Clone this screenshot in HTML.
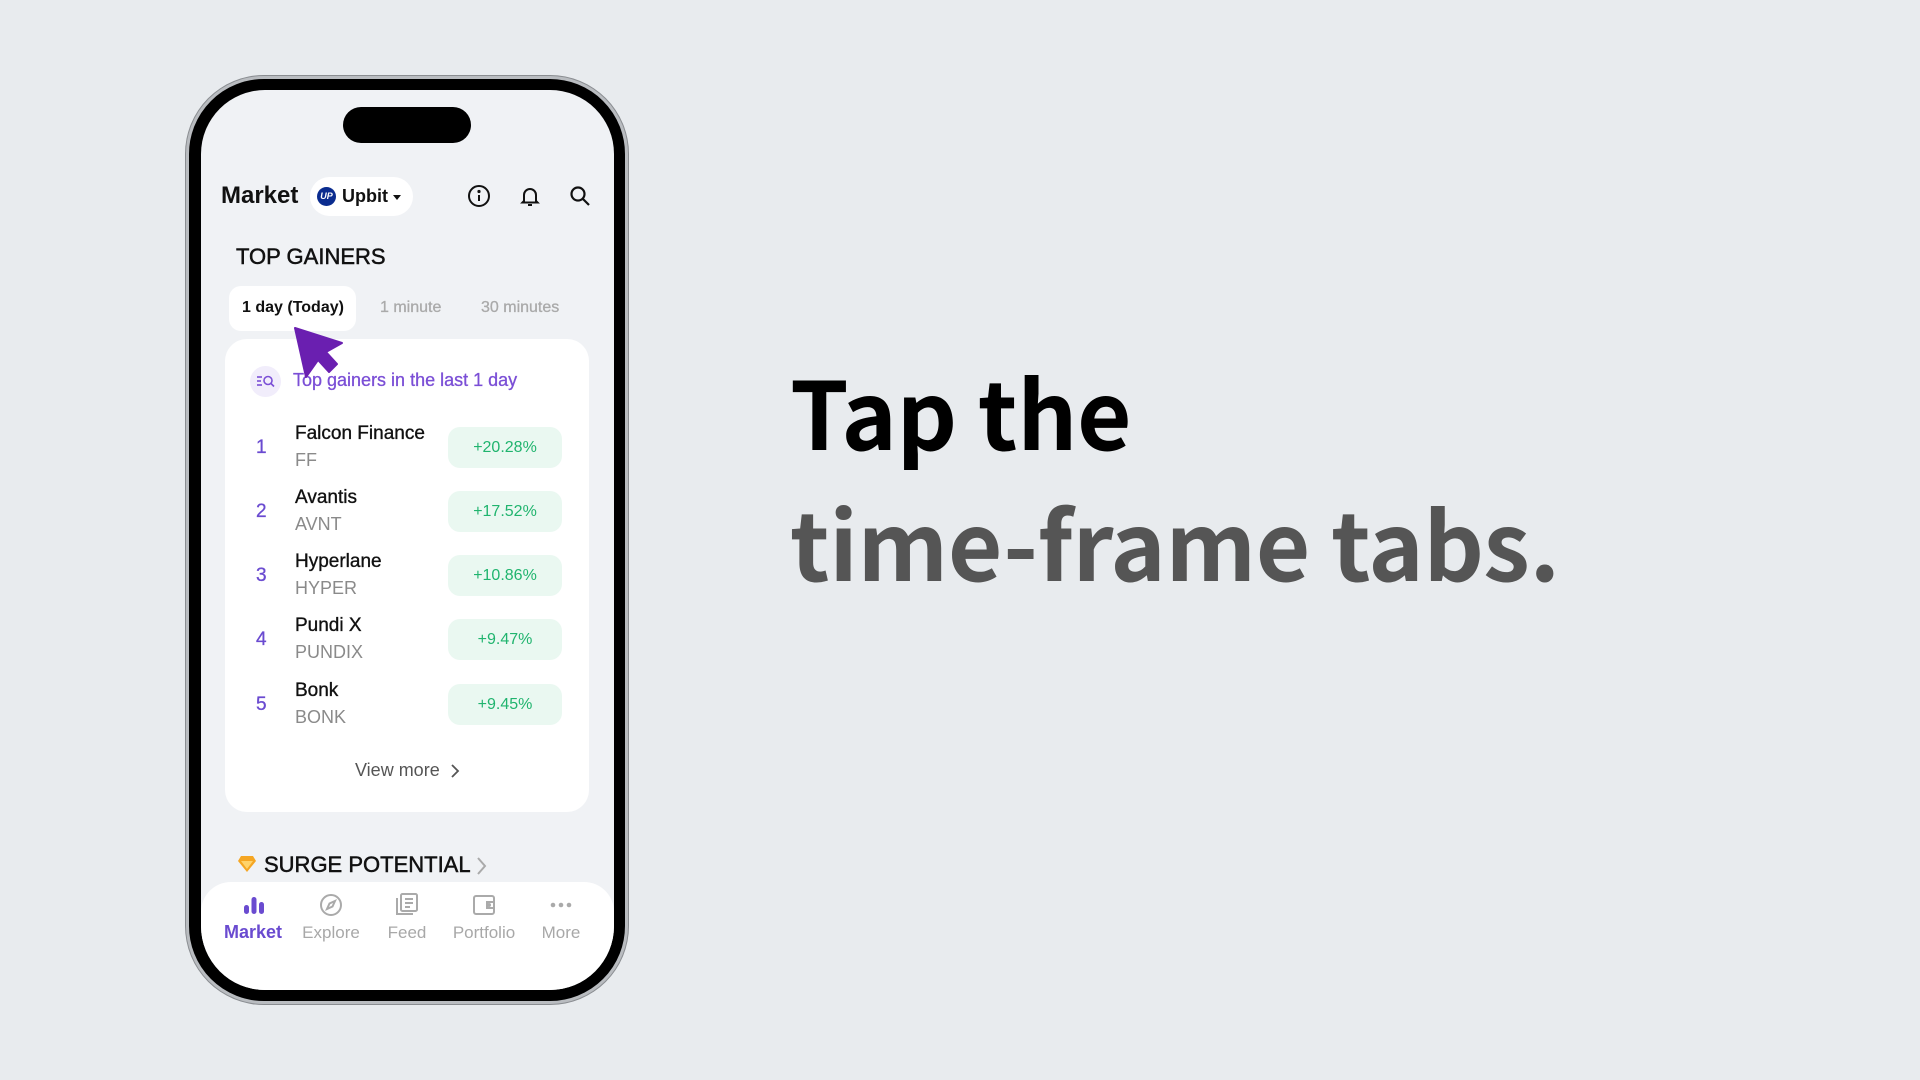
<!DOCTYPE html>
<html><head><meta charset="utf-8"><style>
*{margin:0;padding:0;box-sizing:border-box}
body{width:1920px;height:1080px;background:#e8ebee;position:relative;overflow:hidden;font-family:"Liberation Sans",sans-serif}
.abs{position:absolute}
.frame{left:186px;top:76px;width:442px;height:928px;border-radius:78px;background:#000;border:3px solid #b9bcc0;box-shadow:0 0 0 1px #8a8d91}
.screen{left:201px;top:90px;width:413px;height:900px;border-radius:64px;background:#f0f2f5;overflow:hidden}
.island{left:343px;top:107px;width:128px;height:36px;border-radius:18px;background:#000}
.t{position:absolute;white-space:nowrap}
.pill{position:absolute;left:448px;width:114px;height:41px;border-radius:12px;background:#eaf8f1;color:#20b46e;font-size:16px;text-align:center;line-height:41px}
.name{font-size:19px;color:#111;-webkit-text-stroke:0.35px #111}
.tick{font-size:18px;color:#8a8a8a}
.lab{font-size:17px;color:#a8a8a8;text-align:center;width:80px}
.big{font-family:"Noto Sans CJK JP","Liberation Sans",sans-serif;font-weight:700;font-size:94px;letter-spacing:-0.3px}
.rank{color:#6a4bd0;font-size:19px;-webkit-text-stroke:0.3px #6a4bd0}
</style></head><body>
<div class="abs frame"></div>
<div class="abs screen"></div>
<div class="abs island"></div>

<div class="t" style="left:221px;top:182px;font-size:24px;font-weight:bold;color:#111">Market</div>
<div class="abs" style="left:310px;top:177px;width:103px;height:39px;border-radius:20px;background:#fff"></div>
<div class="abs" style="left:317px;top:187px;width:19px;height:19px;border-radius:50%;background:#0a2c8f;color:#fff;font-size:9px;font-style:italic;font-weight:bold;text-align:center;line-height:19px">UP</div>
<div class="t" style="left:342px;top:186px;font-size:18px;font-weight:bold;color:#111">Upbit</div>
<div class="abs" style="left:393px;top:195px;width:0;height:0;border-left:4px solid transparent;border-right:4px solid transparent;border-top:5px solid #111"></div>
<svg class="abs" style="left:467px;top:184px" width="24" height="24" viewBox="0 0 24 24" fill="none" stroke="#111" stroke-width="2"><circle cx="12" cy="12" r="10"/><line x1="12" y1="11" x2="12" y2="17"/><circle cx="12" cy="7.5" r="0.6" fill="#111"/></svg>
<svg class="abs" style="left:518px;top:184px" width="24" height="24" viewBox="0 0 24 24" fill="none" stroke="#111" stroke-width="2"><path d="M6 17V11a6 6 0 0 1 12 0v6l1.5 1.5h-15z"/><path d="M10 21h4"/></svg>
<svg class="abs" style="left:568px;top:184px" width="24" height="24" viewBox="0 0 24 24" fill="none" stroke="#111" stroke-width="2.2"><circle cx="10" cy="10" r="6.5"/><line x1="15" y1="15" x2="21" y2="21"/></svg>

<div class="t" style="left:236px;top:244px;font-size:22px;color:#111;-webkit-text-stroke:0.5px #111">TOP GAINERS</div>

<div class="abs" style="left:229px;top:286px;width:127px;height:45px;border-radius:12px;background:#fff"></div>
<div class="t" style="left:242px;top:299px;font-size:16px;font-weight:bold;color:#111">1 day (Today)</div>
<div class="t" style="left:380px;top:299px;font-size:16px;color:#aaa;-webkit-text-stroke:0.3px #aaa">1 minute</div>
<div class="t" style="left:481px;top:299px;font-size:16px;color:#aaa;-webkit-text-stroke:0.3px #aaa">30 minutes</div>

<div class="abs" style="left:225px;top:339px;width:364px;height:473px;border-radius:22px;background:#fff"></div>
<div class="abs" style="left:250px;top:366px;width:31px;height:31px;border-radius:50%;background:#f1edfb"></div>
<svg class="abs" style="left:256px;top:373px" width="20" height="16" viewBox="0 0 20 16" fill="none" stroke="#7b4fd6" stroke-width="1.6"><line x1="1" y1="4" x2="6" y2="4"/><line x1="1" y1="8" x2="5" y2="8"/><line x1="1" y1="12" x2="6" y2="12"/><circle cx="12" cy="7.5" r="4"/><line x1="15" y1="10.5" x2="18" y2="13.5"/></svg>
<div class="t" style="left:293px;top:370px;font-size:18px;color:#7b4fd6;-webkit-text-stroke:0.3px #7b4fd6">Top gainers in the last 1 day</div>

<div class="t rank" style="left:256px;top:437px">1</div>
<div class="t name" style="left:295px;top:423px">Falcon Finance</div>
<div class="t tick" style="left:295px;top:450px">FF</div>
<div class="pill" style="top:427px">+20.28%</div>

<div class="t rank" style="left:256px;top:501px">2</div>
<div class="t name" style="left:295px;top:487px">Avantis</div>
<div class="t tick" style="left:295px;top:514px">AVNT</div>
<div class="pill" style="top:491px">+17.52%</div>

<div class="t rank" style="left:256px;top:565px">3</div>
<div class="t name" style="left:295px;top:551px">Hyperlane</div>
<div class="t tick" style="left:295px;top:578px">HYPER</div>
<div class="pill" style="top:555px">+10.86%</div>

<div class="t rank" style="left:256px;top:629px">4</div>
<div class="t name" style="left:295px;top:615px">Pundi X</div>
<div class="t tick" style="left:295px;top:642px">PUNDIX</div>
<div class="pill" style="top:619px">+9.47%</div>

<div class="t rank" style="left:256px;top:694px">5</div>
<div class="t name" style="left:295px;top:680px">Bonk</div>
<div class="t tick" style="left:295px;top:707px">BONK</div>
<div class="pill" style="top:684px">+9.45%</div>

<div class="t" style="left:355px;top:760px;font-size:18px;color:#555">View more</div>
<svg class="abs" style="left:450px;top:763px" width="10" height="16" viewBox="0 0 10 16" fill="none" stroke="#555" stroke-width="1.8"><path d="M2 2l6 6-6 6"/></svg>

<svg class="abs" style="left:237px;top:855px" width="20" height="18" viewBox="0 0 20 18"><path d="M4 1h12l3 5-9 11L1 6z" fill="#f5a623"/><path d="M4 6h12l-6 8z" fill="#ffd36b"/></svg>
<div class="t" style="left:264px;top:852px;font-size:22px;color:#111;-webkit-text-stroke:0.5px #111">SURGE POTENTIAL</div>
<svg class="abs" style="left:476px;top:856px" width="12" height="20" viewBox="0 0 12 20" fill="none" stroke="#aaa" stroke-width="2"><path d="M2 2l7 8-7 8"/></svg>

<div class="abs" style="left:201px;top:882px;width:413px;height:108px;border-radius:30px 30px 64px 64px;background:#fff"></div>
<svg class="abs" style="left:243px;top:895px" width="22" height="20" viewBox="0 0 22 20" fill="#6a4bd0"><rect x="1" y="10" width="5" height="9" rx="2.5"/><rect x="8.5" y="2" width="5" height="17" rx="2.5"/><rect x="16" y="7" width="5" height="12" rx="2.5"/></svg>
<svg class="abs" style="left:319px;top:893px" width="24" height="24" viewBox="0 0 24 24" fill="none" stroke="#aaa" stroke-width="2"><circle cx="12" cy="12" r="10"/><path d="M16 8l-2.5 5.5L8 16l2.5-5.5z"/></svg>
<svg class="abs" style="left:395px;top:892px" width="24" height="26" viewBox="0 0 24 26" fill="none" stroke="#aaa" stroke-width="2"><rect x="6" y="2" width="16" height="17" rx="1.5"/><path d="M2 6v16h16"/><line x1="10" y1="7" x2="18" y2="7"/><line x1="10" y1="11" x2="18" y2="11"/><line x1="10" y1="15" x2="15" y2="15"/></svg>
<svg class="abs" style="left:472px;top:893px" width="24" height="24" viewBox="0 0 24 24" fill="none" stroke="#aaa" stroke-width="2"><rect x="2" y="3" width="20" height="18" rx="2"/><path d="M22 9h-7v6h7"/><circle cx="17" cy="12" r="1" fill="#aaa"/></svg>
<svg class="abs" style="left:549px;top:900px" width="24" height="10" viewBox="0 0 24 10" fill="#aaa"><circle cx="4" cy="5" r="2.3"/><circle cx="12" cy="5" r="2.3"/><circle cx="20" cy="5" r="2.3"/></svg>
<div class="t lab" style="left:213px;top:922px;color:#6a4bd0;font-weight:bold;font-size:18px">Market</div>
<div class="t lab" style="left:291px;top:923px">Explore</div>
<div class="t lab" style="left:367px;top:923px">Feed</div>
<div class="t lab" style="left:444px;top:923px">Portfolio</div>
<div class="t lab" style="left:521px;top:923px">More</div>

<svg class="abs" style="left:290px;top:322px" width="60" height="62" viewBox="0 0 60 62"><path d="M5 6L52 21 36 30 47 42 39 50 28 38 16 55z" fill="#6a1fb0" stroke="#6a1fb0" stroke-width="2" stroke-linejoin="round"/></svg>

<div class="t big" style="left:790px;top:345px;color:#000;line-height:131px">Tap the</div>
<div class="t big" style="left:790px;top:476px;color:#555;line-height:131px">time-frame tabs.</div>
</body></html>
